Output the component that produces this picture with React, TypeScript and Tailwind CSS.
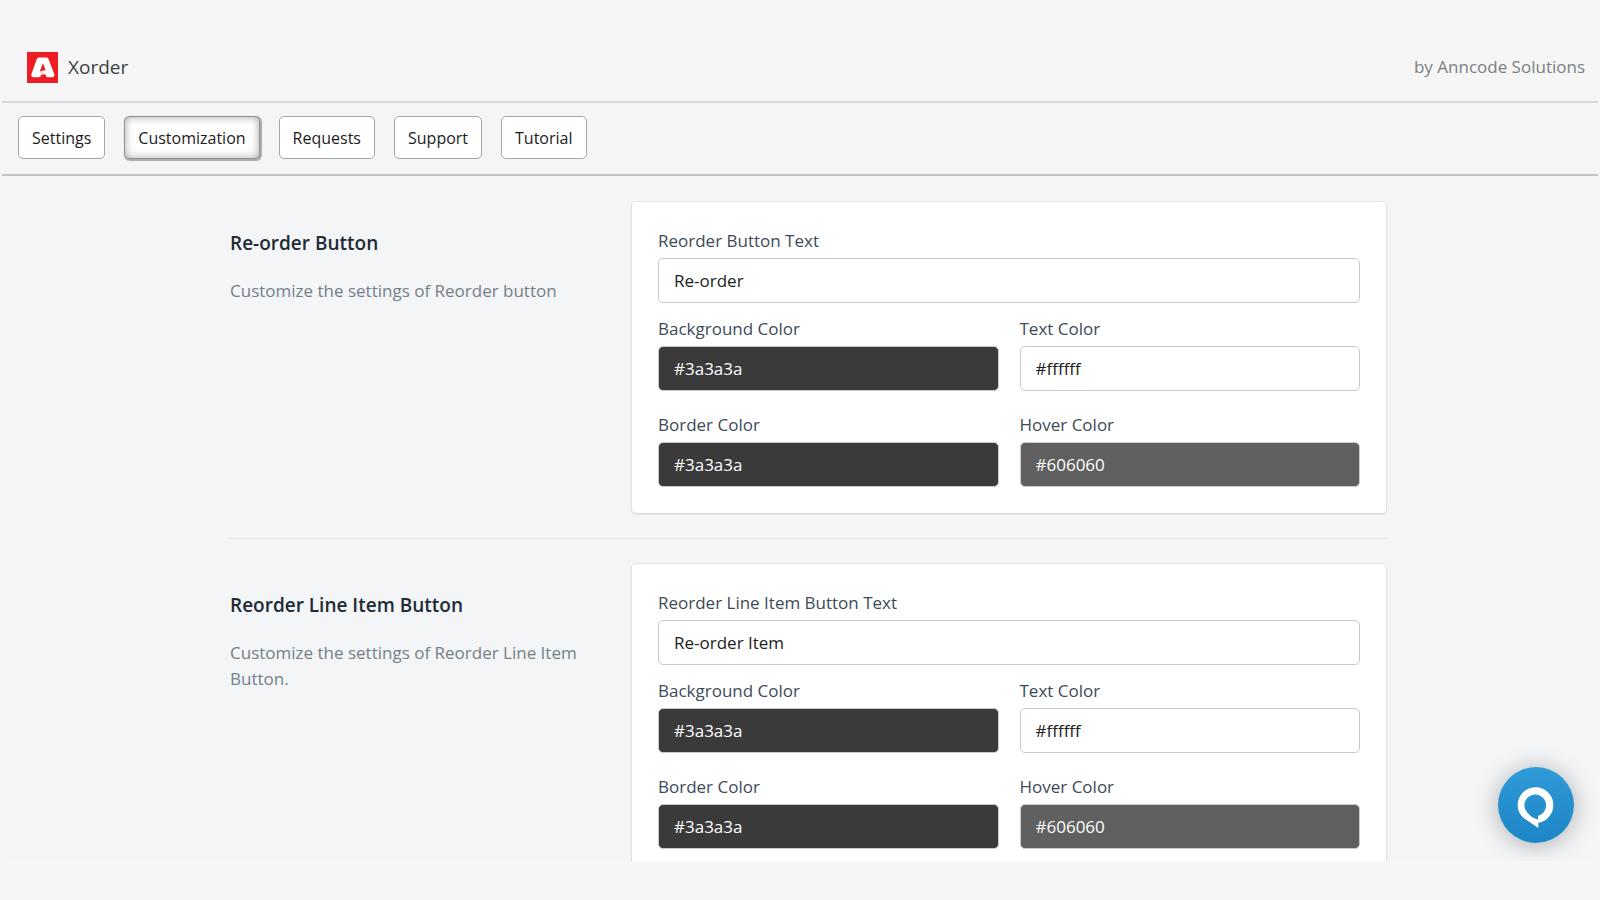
import { useState } from "react";

type Field = { label: string; value: string; tone: string };
type Section = {
  id: string;
  title: string;
  description: string;
  textLabel: string;
  text: string;
};

const tabs = ["Settings", "Customization", "Requests", "Support", "Tutorial"];

const colors: Field[] = [
  { label: "Background Color", value: "#3a3a3a", tone: "bg-[#3a3a3a] text-white" },
  { label: "Text Color", value: "#ffffff", tone: "bg-white text-[#212121]" },
  { label: "Border Color", value: "#3a3a3a", tone: "bg-[#3a3a3a] text-white" },
  { label: "Hover Color", value: "#606060", tone: "bg-[#606060] text-white" },
];

const sections: Section[] = [
  {
    id: "reorder",
    title: "Re-order Button",
    description: "Customize the settings of Reorder button",
    textLabel: "Reorder Button Text",
    text: "Re-order",
  },
  {
    id: "line-item",
    title: "Reorder Line Item Button",
    description: "Customize the settings of Reorder Line Item Button.",
    textLabel: "Reorder Line Item Button Text",
    text: "Re-order Item",
  },
];

function Logo() {
  return (
    <svg viewBox="0 0 31 31" className="size-[31px]" aria-hidden="true">
      <rect width="31" height="31" fill="#ee1c25" />
      <path
        fillRule="evenodd"
        fill="#fff"
        d="M12.200 5.500h7c1.200 0 2 .6 2.400 1.700L27.200 22c.7 1.900-.3 3.300-2.300 3.300h-4.200c-.9 0-1.400-.5-1.700-1.400l-.6-1.700-3.600.2-1.400 1.900c-.5.700-1 1-1.900 1H6.700c-2.100 0-3-1.400-2.300-3.300L9.800 7.200c.4-1.100 1.200-1.700 2.400-1.700zM16 11.200l-3.300 8.200 5.900-1.400z"
      />
      <path d="M18.600 17.500L14.800 22.500M13 25L15.500 18.800" stroke="#d9c4c6" strokeWidth="0.700" fill="none" />
    </svg>
  );
}

function TextField({ id, label, value, tone }: Field & { id: string }) {
  return (
    <div className="flex flex-col gap-1">
      <label htmlFor={id} className="leading-[26px] text-[#3d4a57]">
        {label}
      </label>
      <input
        id={id}
        type="text"
        defaultValue={value}
        className={`h-[45px] w-full rounded-[5px] border border-[#c6cbd1] px-[15px] outline-none ${tone}`}
      />
    </div>
  );
}

function SettingsSection({ section }: { section: Section }) {
  return (
    <section className="grid grid-cols-[378px_1fr] gap-6">
      <div className="pt-[27px]">
        <h2 className="text-[19px] leading-7 font-semibold text-[#212b36]">{section.title}</h2>
        <p className="mt-[21px] leading-[26px] text-[#748089]">{section.description}</p>
      </div>
      <div className="rounded-[4px] bg-white p-[26px] shadow-[0_0_0_1px_rgba(63,63,68,0.06),0_1px_3px_rgba(63,63,68,0.15)]">
        <TextField
          id={`${section.id}-text`}
          label={section.textLabel}
          value={section.text}
          tone="bg-white text-[#212121]"
        />
        <div className="mt-[13px] grid grid-cols-2 gap-x-[21px] gap-y-[21px]">
          {colors.map((c) => (
            <TextField key={c.label} id={`${section.id}-${c.label}`} {...c} />
          ))}
        </div>
      </div>
    </section>
  );
}

export default function App() {
  const [active, setActive] = useState("Customization");
  return (
    <div className="h-screen bg-[#f4f6f8] px-0.5 pt-[38px] pb-[39px] font-['Open_Sans','Noto_Sans',sans-serif] text-[17px]">
      <div className="relative flex h-full flex-col overflow-hidden bg-[#f4f5f7]">
        <header className="flex h-[65px] shrink-0 items-center justify-between border-b-2 border-[#d7dadc] bg-[#f6f6f7] pr-[13px] pb-[5px] pl-[25px]">
          <div className="flex items-center gap-[10px]">
            <Logo />
            <h1 className="text-[19px] leading-7 text-[#3c3f43]">Xorder</h1>
          </div>
          <p className="text-[#7b7f83]">by Anncode Solutions</p>
        </header>
        <nav className="flex h-[73px] shrink-0 items-center gap-[19px] border-b-2 border-[#c3c6c9] px-4 pb-0.5 text-[16px]">
          {tabs.map((tab) => (
            <button
              key={tab}
              type="button"
              onClick={() => setActive(tab)}
              className={`h-[43px] rounded-[5px] border bg-white px-[13px] text-[#1c1c1c] ${
                active === tab
                  ? "border-[#8f9193] shadow-[inset_0_0_8px_rgba(0,0,0,0.35),1px_1px_1px_1px_rgba(0,0,0,0.3)]"
                  : "border-[#a3a6aa]"
              }`}
            >
              {tab}
            </button>
          ))}
        </nav>
        <main className="min-h-0 flex-1 overflow-hidden pt-[26px] pl-4">
          <div className="mx-auto max-w-[1156px]">
            {sections.map((s, i) => (
              <div key={s.id} className={i > 0 ? "mt-[25px] border-t border-[#dfe3e8] pt-[25px]" : ""}>
                <SettingsSection section={s} />
              </div>
            ))}
          </div>
        </main>
        <button
          type="button"
          aria-label="Open chat"
          className="absolute right-6 bottom-[18px] size-[76px] rounded-full bg-linear-to-b from-[#2e9ad6] to-[#1d86c6] shadow-[0_2px_24px_rgba(0,0,0,0.3)]"
        >
          <svg viewBox="83 80 228 228" className="size-full" aria-hidden="true">
            <path
              fillRule="evenodd"
              fill="#fff"
              d="M204 263L161 234C148 223 142 210 142 194A53.500 53.500 0 1 1 204 247ZM204 226A32.500 32.500 0 1 0 170 216C178 226 188 234 202 238Z"
            />
          </svg>
        </button>
      </div>
    </div>
  );
}
